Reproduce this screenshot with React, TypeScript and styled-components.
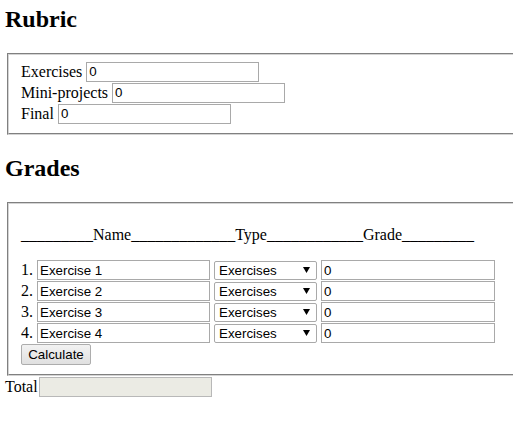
import * as React from "react";
import styled, { createGlobalStyle } from "styled-components";

const GlobalStyle = createGlobalStyle`
  html, body {
    margin: 0;
    overflow: hidden;
    background: #fff;
  }
  body {
    padding: 0 5px;
    font-family: "Liberation Serif", "Times New Roman", serif;
    font-size: 16px;
    color: #000;
  }
`;

const Page = styled.div`
  width: 540px;
`;

const Heading = styled.h2<{ $first?: boolean }>`
  font-size: 24px;
  font-weight: bold;
  margin: ${p => (p.$first ? "6px" : "20px")} 0 20px;
  line-height: 27px;
`;

const Box = styled.fieldset`
  margin: 0 2px;
  padding: 6px 12px 9px;
  border: 2px groove #d4d4d4;
`;

const FieldRow = styled.div<{ $gap?: number }>`
  display: flex;
  align-items: center;
  height: 21px;
  gap: ${p => p.$gap ?? 4}px;
`;

const TextInput = styled.input<{ $w?: number }>`
  box-sizing: border-box;
  width: ${p => p.$w ?? 173}px;
  height: 20px;
  margin: 0;
  padding: 1px 2px;
  border: 1px solid #a9a9a9;
  font-family: "Liberation Sans", Arial, sans-serif;
  font-size: 13.33px;
  color: #000;
  background: #fff;
  &:disabled {
    background: #ebebe4;
    border-color: #b8b8b8;
  }
`;

const HeaderLine = styled.p`
  margin: 16px 0;
  line-height: 18px;
  white-space: pre;
`;

const ItemRow = styled.div`
  display: flex;
  align-items: flex-start;
  height: 21px;
`;

const Num = styled.span`
  width: 16px;
  line-height: 20px;
`;

const Cells = styled.div`
  display: flex;
  gap: 4px;
  align-items: center;
  height: 20px;
`;

const SelectBox = styled.label`
  box-sizing: border-box;
  display: inline-flex;
  align-items: center;
  width: 103px;
  height: 19px;
  border: 1px solid #a9a9a9;
  border-radius: 2px;
  background: #fff;
  padding-right: 6px;
`;

const Select = styled.select`
  appearance: none;
  flex: 1;
  min-width: 0;
  border: none;
  background: transparent;
  outline: none;
  padding: 0 0 0 4px;
  margin: 0;
  font-family: "Liberation Sans", Arial, sans-serif;
  font-size: 13.33px;
  color: #000;
`;

const Arrow = styled.svg`
  width: 7px;
  height: 6px;
  flex: none;
`;

const Button = styled.button`
  box-sizing: border-box;
  height: 21px;
  width: 70px;
  margin: 0;
  padding: 0 6px;
  border: 1px solid #adadad;
  border-radius: 2px;
  background: linear-gradient(#f2f2f2, #e0e0e0);
  font-family: "Liberation Sans", Arial, sans-serif;
  font-size: 13.33px;
  color: #000;
`;

const items = ["Exercise 1", "Exercise 2", "Exercise 3", "Exercise 4"];

export default function App() {
  return (
    <Page>
      <GlobalStyle />
      <Heading $first>Rubric</Heading>
      <Box>
        <FieldRow>
          Exercises <TextInput defaultValue="0" />
        </FieldRow>
        <FieldRow>
          Mini-projects <TextInput defaultValue="0" />
        </FieldRow>
        <FieldRow>
          Final <TextInput defaultValue="0" />
        </FieldRow>
      </Box>
      <Heading>Grades</Heading>
      <Box>
        <HeaderLine>
          _________Name_____________Type____________Grade_________
        </HeaderLine>
        {items.map((name, i) => (
          <ItemRow key={name}>
            <Num>{i + 1}.</Num>
            <Cells>
              <TextInput defaultValue={name} />
              <SelectBox>
                <Select defaultValue="Exercises">
                  <option>Exercises</option>
                  <option>Mini-projects</option>
                  <option>Final</option>
                </Select>
                <Arrow viewBox="0 0 7 6">
                  <path d="M0 0h7L3.5 6z" fill="#000" />
                </Arrow>
              </SelectBox>
              <TextInput defaultValue="0" $w={174} />
            </Cells>
          </ItemRow>
        ))}
        <Button>Calculate</Button>
      </Box>
      <FieldRow $gap={1}>
        Total
        <TextInput disabled />
      </FieldRow>
    </Page>
  );
}
